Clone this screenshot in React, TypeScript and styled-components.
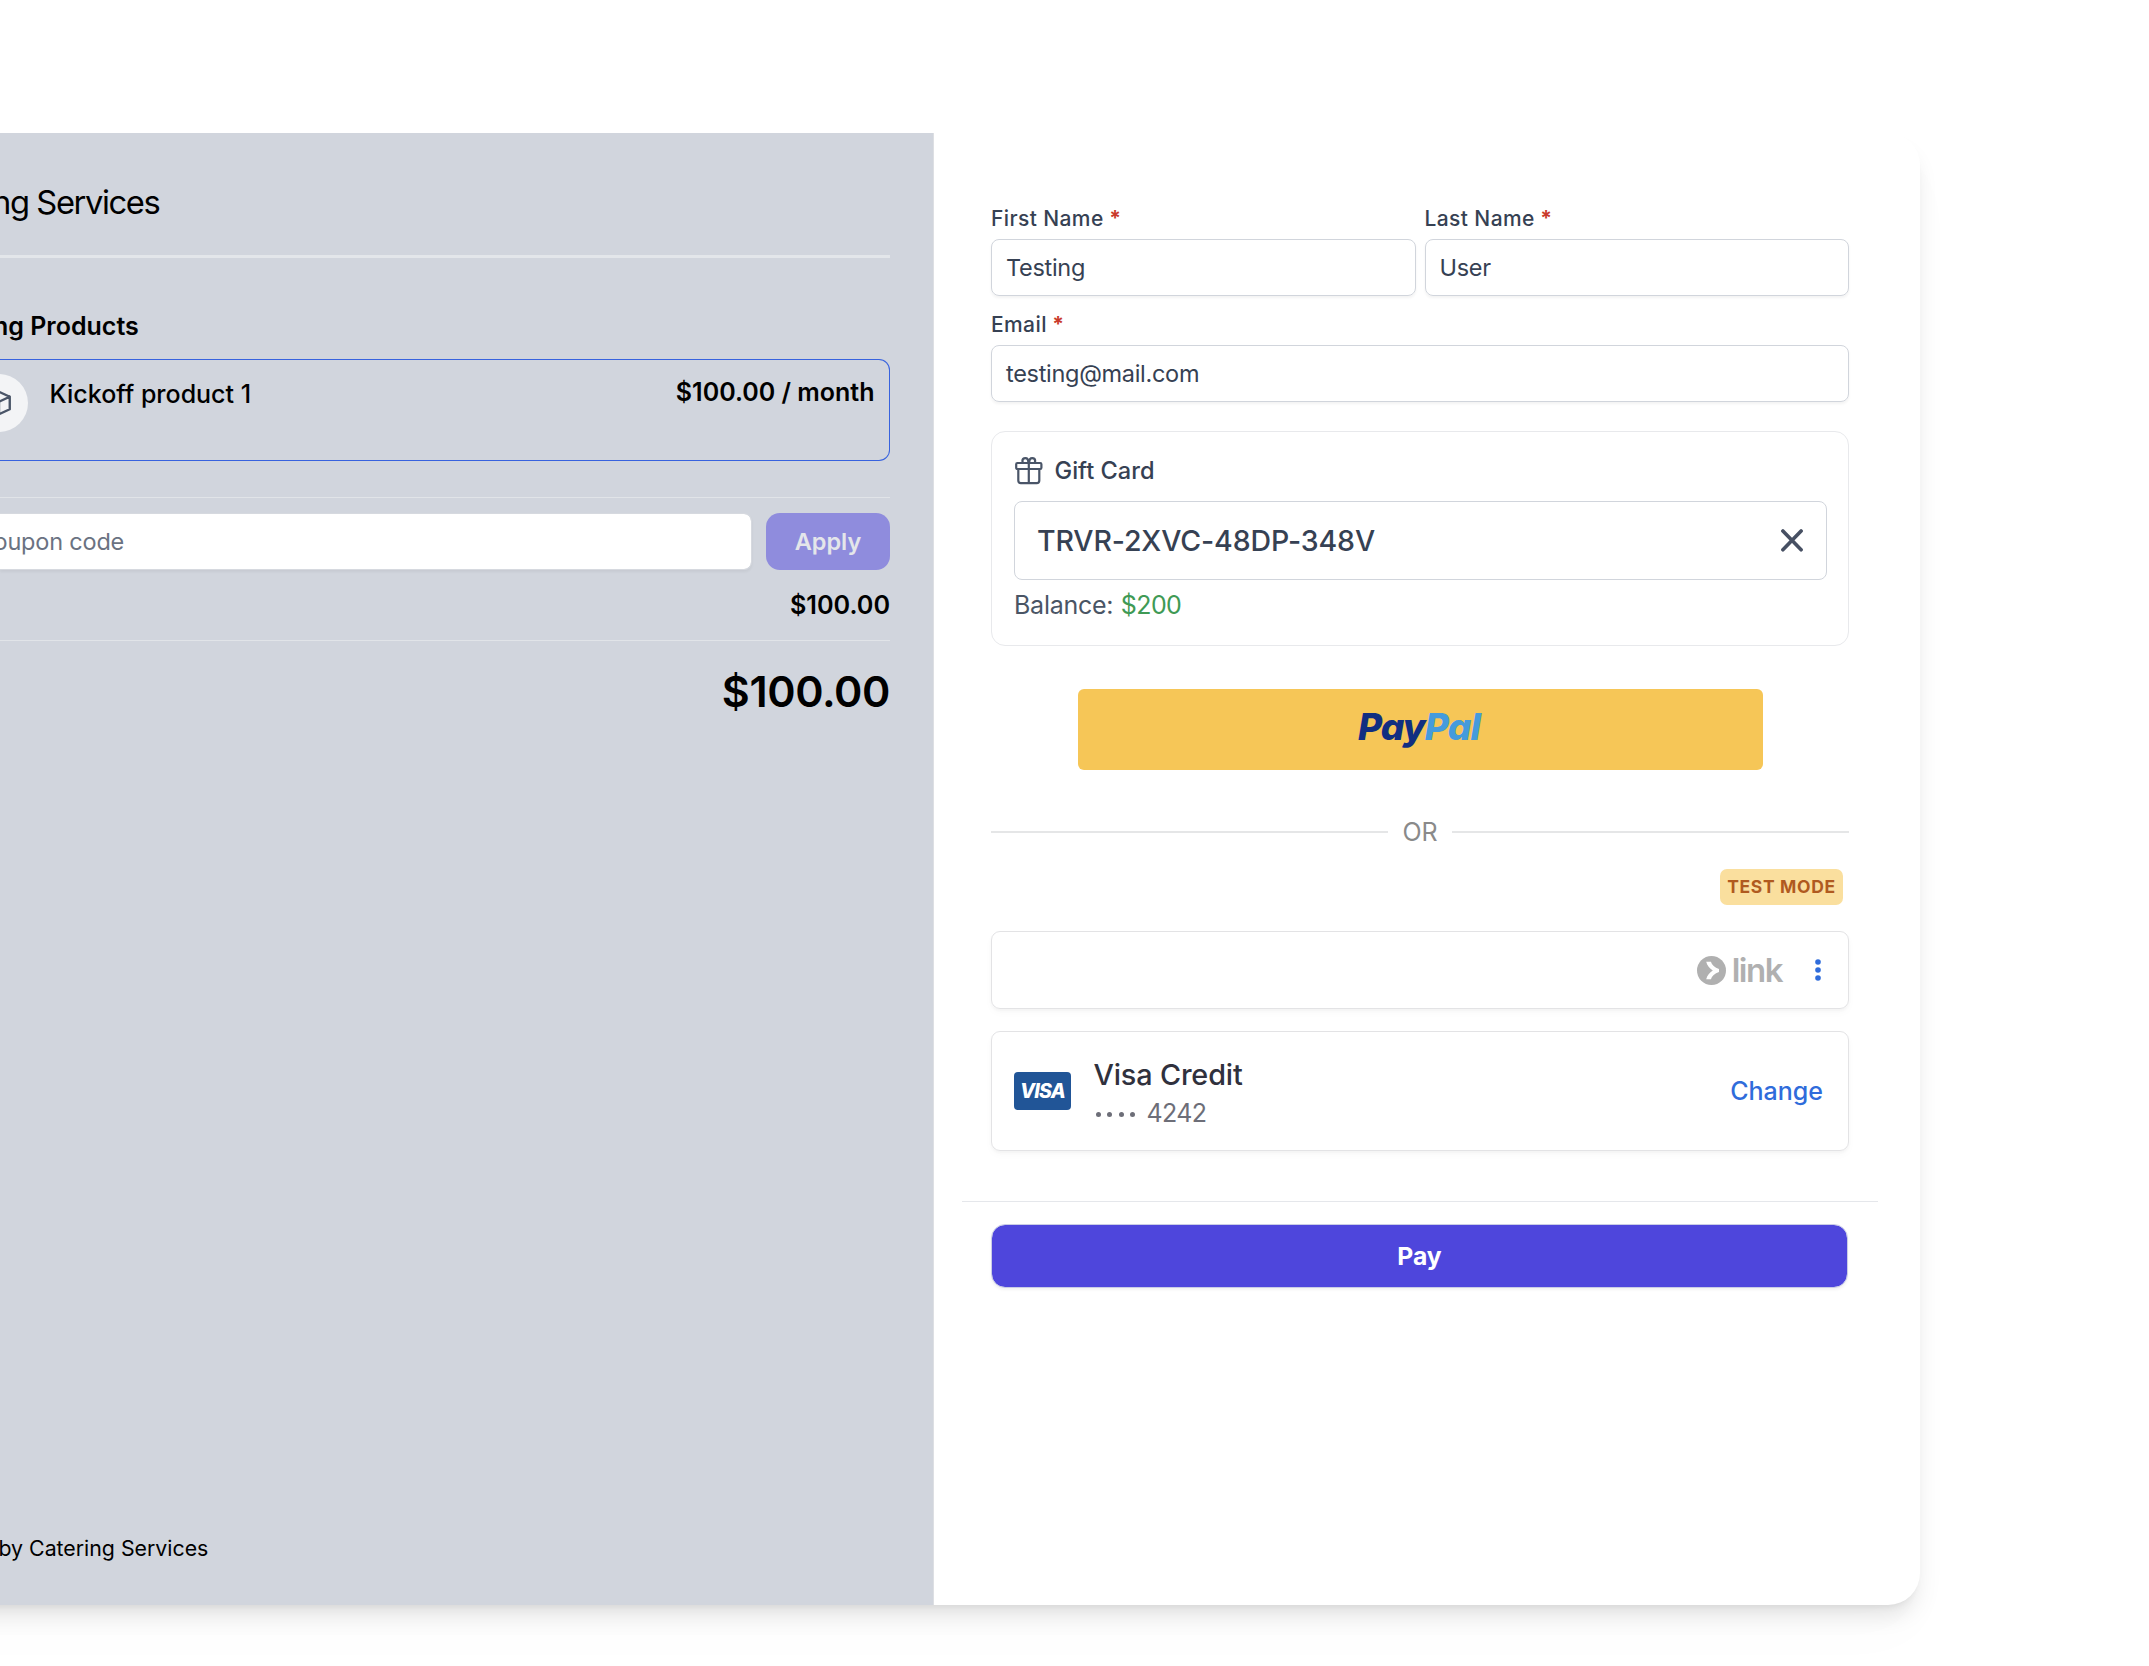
import React from "react";
import styled, { createGlobalStyle } from "styled-components";

const GlobalStyle = createGlobalStyle`
  *, *::before, *::after { box-sizing: border-box; }
  html, body { margin: 0; background: #fff; overflow: hidden; }
  body { font-family: Inter, "Liberation Sans", sans-serif; -webkit-font-smoothing: antialiased; }
  button { font-family: inherit; border: 0; padding: 0; background: none; cursor: pointer; }
`;

const Page = styled.div`
  height: 1666px;
  padding-top: 133px;
  overflow: hidden;
`;

const Card = styled.main`
  display: flex;
  width: 2000px;
  height: 1472px;
  margin-left: -80px;
  border-radius: 32px;
  background: #fff;
  box-shadow: 0 15px 22px -4px rgba(0, 0, 0, 0.1), 0 6px 9px -6px rgba(0, 0, 0, 0.1),
    0 30px 60px rgba(0, 0, 0, 0.015);
`;

const Summary = styled.section`
  display: flex;
  flex-direction: column;
  flex: none;
  width: 1014px;
  padding: 46px 43px 42px 80px;
  background: #d1d5dd;
  border-right: 1px solid #dddfe3;
  border-radius: 32px 0 0 32px;
  color: #000;
`;

const Checkout = styled.section`
  display: flex;
  flex-direction: column;
  flex: 1;
  padding: 71px 72px 0 57px;
`;

interface TextProps {
  $size: number;
  $line: number;
  $weight?: number;
  $track?: number;
  $color?: string;
}

const Text = styled.span<TextProps>`
  display: block;
  white-space: pre;
  font-size: ${(p) => p.$size}px;
  line-height: ${(p) => p.$line}px;
  font-weight: ${(p) => p.$weight ?? 400};
  letter-spacing: ${(p) => p.$track ?? 0}px;
  color: ${(p) => p.$color ?? "inherit"};
`;

const Title = styled(Text)`
  margin-left: -8px;
`;

const SectionTitle = styled(Text)`
  margin: 50px 0 15px -7px;
`;

const Rule = styled.hr<{ $top: number; $thick?: number; $color?: string }>`
  flex: none;
  width: 100%;
  height: ${(p) => p.$thick ?? 1}px;
  margin: ${(p) => p.$top}px 0 0;
  border: 0;
  background: ${(p) => p.$color ?? "#e1e4e8"};
`;

const ProductBox = styled.div`
  display: flex;
  align-items: flex-start;
  height: 102px;
  padding: 14px 14.5px 0 0;
  border: 1px solid #3762de;
  border-left: 0;
  border-radius: 0 11px 11px 0;
`;

const ProductIcon = styled.div`
  display: grid;
  place-items: center;
  flex: none;
  width: 58px;
  height: 58px;
  margin-left: -30px;
  border-radius: 50%;
  background: #f3f4f6;
`;

const ProductName = styled(Text)`
  flex: 1;
  margin: 2px 0 0 21.5px;
`;

const CouponRow = styled.div`
  display: flex;
  gap: 14px;
  height: 57px;
  margin: 15px 0 17px;
`;

const CouponField = styled.div`
  display: flex;
  align-items: center;
  flex: 1;
  border: 1px solid #d6d9df;
  border-left: 0;
  border-radius: 0 8px 8px 0;
  background: #fff;
  background-clip: padding-box;
  box-shadow: 0 2px 3px rgba(0, 0, 0, 0.05);
`;

const Placeholder = styled(Text)`
  margin-left: -6.5px;
`;

const ApplyButton = styled.button`
  display: grid;
  place-items: center;
  width: 124px;
  border-radius: 14px;
  background: #8f8cdd;
`;

const Amount = styled(Text)`
  align-self: flex-end;
`;

const Total = styled(Amount)`
  margin-top: 20px;
`;

const Footer = styled(Text)`
  margin: auto 0 0 -1.5px;
`;

const NameRow = styled.div`
  display: grid;
  grid-template-columns: 1fr 1fr;
  gap: 9px;
  margin-bottom: 14px;
`;

const FieldGroup = styled.label`
  display: flex;
  flex-direction: column;
  gap: 5px;
`;

const LabelRow = styled.span`
  display: flex;
  gap: 5.5px;
`;

const FieldBox = styled.span`
  display: flex;
  align-items: center;
  height: 57px;
  padding-left: 14px;
  border: 1px solid #d1d5dc;
  border-radius: 8px;
  box-shadow: 0 2px 3px rgba(0, 0, 0, 0.05);
`;

const GiftBox = styled.div`
  height: 215px;
  margin-top: 29px;
  padding: 23px 21px 0 22px;
  border: 1px solid #e8e9ec;
  border-radius: 14px;
`;

const GiftHeader = styled.div`
  display: flex;
  align-items: center;
  gap: 11.5px;
  height: 30px;
`;

const GiftCode = styled.div`
  display: flex;
  align-items: center;
  justify-content: space-between;
  height: 79px;
  margin: 16px 0 7px;
  padding: 0 23px 0 22px;
  border: 1px solid #d1d5dc;
  border-radius: 8px;
`;

const BalanceRow = styled.div`
  display: flex;
  gap: 7.5px;
`;

const PayPalButton = styled.button`
  display: flex;
  justify-content: center;
  width: 685px;
  height: 81px;
  margin: 43px auto 0;
  padding: 14.5px 2px 0 0;
  border-radius: 6px;
  background: #f6c657;
`;

const PayPalWord = styled(Text)`
  font-style: italic;
  font-feature-settings: "cv11";
`;

const OrRow = styled.div`
  display: flex;
  align-items: center;
  gap: 14px;
  height: 36px;
  margin: 44px 0 19px;

  &::before, &::after {
    content: "";
    flex: 1;
    height: 2px;
    background: #e5e6e7;
  }
`;

const TestBadge = styled.div`
  display: grid;
  place-items: center;
  align-self: flex-end;
  width: 123px;
  height: 36px;
  margin: 0 6px 26px 0;
  border-radius: 7px;
  background: #fadf9e;
`;

const Panel = styled.div<{ $height: number }>`
  display: flex;
  align-items: center;
  flex: none;
  width: 858px;
  height: ${(p) => p.$height}px;
  border: 1px solid #e3e3e5;
  border-radius: 9px;
  box-shadow: 0 2px 3px rgba(0, 0, 0, 0.03), 0 4px 9px rgba(0, 0, 0, 0.025);
`;

const LinkPanel = styled(Panel)`
  justify-content: flex-end;
  margin-bottom: 22px;
  padding-right: 27.5px;
`;

const LinkWord = styled(Text)`
  margin: 0 32.5px 0 5.5px;
`;

const CardPanel = styled(Panel)`
  padding: 0 25px 0 22px;
`;

const VisaBadge = styled.div`
  display: grid;
  place-items: center;
  width: 57px;
  height: 38px;
  margin-right: 22.5px;
  border-radius: 4px;
  background: #215597;
`;

const VisaWord = styled(Text)`
  font-style: italic;
`;

const CardInfo = styled.div`
  flex: 1;
  padding-top: 5px;
`;

const CardNumber = styled.div`
  display: flex;
  align-items: center;
  gap: 11.5px;
  padding-left: 2px;
`;

const MaskDots = styled.div`
  display: flex;
  gap: 6.5px;
  padding-top: 4px;

  i {
    width: 5px;
    height: 5px;
    border-radius: 50%;
    background: #6d6e78;
  }
`;

const PayArea = styled.div`
  margin: 50px -29px 0;
  padding: 22px 29px 0;
  border-top: 1px solid #e5e7eb;
`;

const PayButton = styled.button`
  display: grid;
  place-items: center;
  width: 857px;
  height: 64px;
  border: 1px solid #c9cce6;
  border-radius: 14px;
  background: #4e46dc;
  background-clip: padding-box;
  box-shadow: 0 2px 3px rgba(0, 0, 0, 0.05);
`;

const INK = "#364153";

function Field({ label, value }: { label: string; value: string }) {
  return (
    <FieldGroup>
      <LabelRow>
        <Text $size={21} $line={30} $weight={500} $track={0.4} $color={INK}>{label}</Text>
        <Text $size={21} $line={30} $weight={700} $color="#c93a2b">*</Text>
      </LabelRow>
      <FieldBox>
        <Text $size={23.5} $line={33} $track={-0.3} $color={INK}>{value}</Text>
      </FieldBox>
    </FieldGroup>
  );
}

const CubeIcon = () => (
  <svg width="30" height="30" viewBox="0 0 24 24" fill="none" stroke="#4a5568" strokeWidth="1.9" strokeLinecap="round" strokeLinejoin="round">
    <path d="M20.6 7l-8.6-4-8.6 4m17.2 0l-8.6 4m8.6-4v10l-8.6 4m0-10L3.4 7m8.6 4v10M3.4 7v10l8.6 4" />
  </svg>
);

const GiftIcon = () => (
  <svg width="29" height="29" viewBox="0 0 29 29" fill="none" stroke="#4a5568" strokeWidth="2.2">
    <rect x="2.2" y="7" width="25.2" height="6" rx="1.2" />
    <path d="M4.3 13v11.6a2.6 2.6 0 0 0 2.6 2.6h15.8a2.6 2.6 0 0 0 2.6-2.6V13M14.8 6.6V27" />
    <path d="M14.3 6.4c0-2.6-1-4.2-2.9-4.2-2 0-3 1.5-3 2.7 0 .7.3 1.3.7 1.7M15.3 6.4c0-2.6 1-4.2 2.9-4.2 2 0 3 1.5 3 2.7 0 .7-.3 1.3-.7 1.7" />
  </svg>
);

const CloseIcon = () => (
  <svg width="22" height="23" viewBox="0 0 22 23" stroke="#475063" strokeWidth="3.6" strokeLinecap="round">
    <path d="M1.9 2l18.2 18.8M20.1 2L1.9 20.8" />
  </svg>
);

const LinkMark = () => (
  <svg width="29" height="29" viewBox="0 0 29 29">
    <circle cx="14.5" cy="14.5" r="14.5" fill="#b0b0b0" />
    <path d="M9.2 5.8h4.700c.9 3.2 3.8 5.7 8.1 7.2v3c-4.3 1.5-7.2 4-8.1 7.2H9.2c1-3.7 3.3-6.7 6.6-8.7-3.3-2-5.6-5-6.6-8.7z" fill="#fff" />
  </svg>
);

const MoreIcon = () => (
  <svg width="6" height="22" viewBox="0 0 6 22" fill="#2f6cdb">
    <circle cx="3" cy="3" r="2.8" />
    <circle cx="3" cy="11" r="2.8" />
    <circle cx="3" cy="19" r="2.8" />
  </svg>
);

export default function App() {
  return (
    <Page>
      <GlobalStyle />
      <Card>
        <Summary>
          <Title $size={32.7} $line={46} $track={-1.4}>ng Services</Title>
          <Rule $top={30} $thick={3} $color="#e3e6ea" />
          <SectionTitle $size={25} $line={36} $weight={600}>ng Products</SectionTitle>
          <ProductBox>
            <ProductIcon><CubeIcon /></ProductIcon>
            <ProductName $size={25} $line={36} $weight={500}>Kickoff product 1</ProductName>
            <Text $size={25} $line={36} $weight={600}>$100.00 / month</Text>
          </ProductBox>
          <Rule $top={36} />
          <CouponRow>
            <CouponField>
              <Placeholder $size={23.5} $line={32} $track={-0.2} $color="#6a7282">oupon code</Placeholder>
            </CouponField>
            <ApplyButton>
              <Text $size={23.5} $line={32} $weight={600} $color="#e4e6ea">Apply</Text>
            </ApplyButton>
          </CouponRow>
          <Amount $size={25.2} $line={36} $weight={600}>$100.00</Amount>
          <Rule $top={17} />
          <Total $size={43} $line={60} $weight={600} $track={-0.4}>$100.00</Total>
          <Footer $size={21.3} $line={30}>by Catering Services</Footer>
        </Summary>

        <Checkout>
          <NameRow>
            <Field label="First Name" value="Testing" />
            <Field label="Last Name" value="User" />
          </NameRow>
          <Field label="Email" value="testing@mail.com" />

          <GiftBox>
            <GiftHeader>
              <GiftIcon />
              <Text $size={23.6} $line={31} $weight={500} $color={INK}>Gift Card</Text>
            </GiftHeader>
            <GiftCode>
              <Text $size={28.5} $line={40} $weight={500} $track={-0.13} $color={INK}>TRVR-2XVC-48DP-348V</Text>
              <CloseIcon />
            </GiftCode>
            <BalanceRow>
              <Text $size={25} $line={36} $track={-0.25} $color="#4a5565">Balance:</Text>
              <Text $size={25} $line={36} $track={-0.6} $color="#3f9a55">$200</Text>
            </BalanceRow>
          </GiftBox>

          <PayPalButton>
            <PayPalWord $size={37} $line={46} $weight={800} $track={-0.9} $color="#112e81">Pay</PayPalWord>
            <PayPalWord $size={37} $line={46} $weight={800} $track={-0.9} $color="#459bdc">Pal</PayPalWord>
          </PayPalButton>

          <OrRow><Text $size={25} $line={36} $color="#8a8a8a">OR</Text></OrRow>

          <TestBadge>
            <Text $size={17.5} $line={24} $weight={700} $track={0.65} $color="#b05a1f">TEST MODE</Text>
          </TestBadge>

          <LinkPanel $height={78}>
            <LinkMark />
            <LinkWord $size={33} $line={40} $weight={600} $track={-1.5} $color="#b0b0b0">link</LinkWord>
            <MoreIcon />
          </LinkPanel>

          <CardPanel $height={120}>
            <VisaBadge>
              <VisaWord $size={19.5} $line={24} $weight={800} $track={-0.7} $color="#fff">VISA</VisaWord>
            </VisaBadge>
            <CardInfo>
              <Text $size={28.8} $line={38} $weight={500} $track={-0.15} $color="#30313d">Visa Credit</Text>
              <CardNumber>
                <MaskDots><i /><i /><i /><i /></MaskDots>
                <Text $size={25} $line={38} $track={-0.6} $color="#6d6e78">4242</Text>
              </CardNumber>
            </CardInfo>
            <Text $size={25} $line={36} $weight={500} $color="#2f6cdb">Change</Text>
          </CardPanel>

          <PayArea>
            <PayButton>
              <Text $size={24.7} $line={34} $weight={700} $color="#fff">Pay</Text>
            </PayButton>
          </PayArea>
        </Checkout>
      </Card>
    </Page>
  );
}
